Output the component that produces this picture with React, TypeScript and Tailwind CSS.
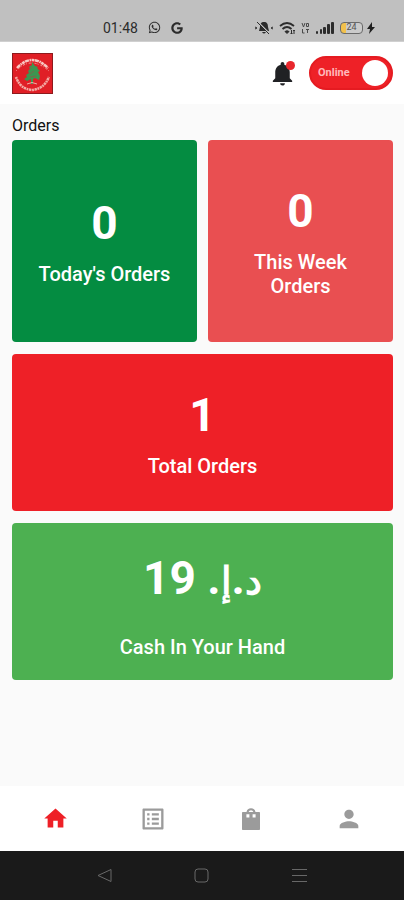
import type { ReactNode } from "react";
import { FaGoogle, FaWhatsapp } from "react-icons/fa";
import { MdHome, MdListAlt, MdNotifications, MdPerson } from "react-icons/md";

const navItems = [
  { label: "Home", icon: <MdHome size={27} />, active: true },
  { label: "Orders", icon: <MdListAlt size={28} />, active: false },
  { label: "Shop", icon: <BagIcon />, active: false },
  { label: "Profile", icon: <MdPerson size={28} />, active: false },
];

function BagIcon() {
  return (
    <svg width="20" height="24" viewBox="0 0 20 24" fill="currentColor">
      <path
        fillRule="evenodd"
        d="M2 5h3.500a4.600 4.600 0 0 1 9 0H18c.6 0 1 .4 1 1v16c0 .6-.4 1-1 1H2c-.6 0-1-.4-1-1V6c0-.6.4-1 1-1Zm5.600 0h4.800a2.500 2.500 0 0 0-4.800 0ZM5.400 7.200v3.400h3V7.200Zm6.200 0v3.400h3V7.200Z"
      />
    </svg>
  );
}

function Logo() {
  return (
    <svg width="41" height="41" viewBox="0 0 41 41" role="img" aria-label="Logo">
      <rect width="41" height="41" fill="#8e1a1d" />
      <rect x="1" y="1" width="39" height="39" fill="#e01f26" />
      {/* lettering ring */}
      <path d="M5 15Q20-1 36 15" fill="none" stroke="#f8c9c3" strokeWidth="2.500" strokeDasharray="4 .6 1.500 .6 3 .5" />
      <path d="M4 18Q19 2 37 18" fill="none" stroke="#f3a49f" strokeWidth="1" strokeDasharray="1 2 2 1" />
      <path d="M4 24Q8 36 20 37Q32 36 37 24" fill="none" stroke="#f3aaa4" strokeWidth="2.500" strokeDasharray="1.800 .6 2.500 .6" />
      {/* cedar */}
      <path
        d="M20 9l3 4 3 1-1 1 3 3-2 1 2 4-1 4-4-2-2 1v5h-2v-5l-4 2-3-2 3-2-1-2 3-2-1-2 2-2-1-2 3-2Z"
        fill="#3d9650"
      />
      <path d="M20 14l-3 3M22 18l-4 3M24 23l-6 1" stroke="#79694a" strokeWidth="1" />
      <path d="M15 31q5-3 10 0" fill="none" stroke="#f3aaa4" strokeWidth="1" />
    </svg>
  );
}

function StatusBar() {
  return (
    <div className="flex h-[42px] items-center justify-between border-b border-[#d0d0d0] bg-[#c0c0c0] pt-[14px] pr-[29px] pl-[103px] text-[#2c2c2c]">
      <div className="flex items-center gap-2.5">
        <span className="text-sm">01:48</span>
        <FaWhatsapp size={13} />
        <FaGoogle size={12} />
      </div>

      <div className="flex items-center gap-1.5">
        <svg width="18" height="14" viewBox="0 0 18 14">
          <path d="M9 1C6 1 5 3 5 6l-1 4h10l-1-4c0-3-1-5-4-5ZM7 11h4q-2 3-4 0" fill="#2c2c2c" />
          <path d="M3 1l12 12" stroke="#c0c0c0" strokeWidth="1.500" />
          <path d="M2 1l12 12M0 6l2 1-2 1M18 6l-2 1 2 1" fill="none" stroke="#2c2c2c" strokeWidth="1" />
        </svg>
        <svg width="16" height="14" viewBox="0 0 16 14" fill="none" stroke="#2c2c2c">
          <path d="M1 5q7-6 14 0M3.500 8q4.500-4 9 0" strokeWidth="1.800" />
          <path d="M6 10.500q2-1.500 4 0l-2 2Z" fill="#2c2c2c" strokeWidth="1" />
          <path d="M12.500 9v4M11.500 12l1 1 1-1M15 13V9M14.300 10l.7-1 .7 1" strokeWidth="1" />
        </svg>
        <svg width="9" height="12" viewBox="0 0 9 12" fill="none" stroke="#4a4a4a">
          <path d="M1 1l1.500 4L4 1M5.500 1.500h2v3h-2ZM1.500 7v4h2M5 7.500h3M6.500 7.500V11" />
        </svg>
        <svg width="18" height="12" viewBox="0 0 18 12" fill="#2c2c2c">
          <rect y="9" width="2" height="3" rx="1" />
          <rect x="4" y="7" width="2" height="5" rx="1" />
          <rect x="7" y="5" width="3" height="7" rx="1" />
          <rect x="11" y="2" width="3" height="10" rx="1" />
          <rect x="15" width="3" height="12" rx="1" />
        </svg>
        <div className="flex items-center gap-1">
          <div className="flex h-3 w-[23px] items-center justify-center rounded-sm border border-[#6a6a6a] bg-linear-to-r from-[#f2c14c] from-25% to-[#cbcbcb] to-25% text-[9px] text-[#555555]">
            24
          </div>
          <svg width="8" height="12" viewBox="0 0 8 12" fill="#202020">
            <path d="M5 0L0 7h3l-1 5 6-7H5Z" />
          </svg>
        </div>
      </div>
    </div>
  );
}

function Header() {
  return (
    <header className="flex h-[62px] items-center justify-between bg-white pr-[11px] pl-3">
      <Logo />

      <div className="flex items-center gap-3">
        <button type="button" aria-label="Notifications" className="relative text-[#202124]">
          <MdNotifications size={29} />
          <span className="absolute top-0.5 right-0.5 size-[9px] rounded-full bg-[#e8262c]" />
        </button>

        <label className="flex h-[34px] w-[84px] cursor-pointer items-center justify-between rounded-full border-2 border-[#e51b21] bg-[#ee2127] pr-[3px] pl-[7px]">
          <span className="text-[11px] font-bold text-[#ffb9bb]">Online</span>
          <input
            type="checkbox"
            role="switch"
            defaultChecked
            className="size-[26px] appearance-none rounded-full bg-white"
          />
        </label>
      </div>
    </header>
  );
}

type CardProps = {
  label: string;
  className: string;
  children: ReactNode;
};

function StatCard({ label, className, children }: CardProps) {
  return (
    <div
      className={`flex flex-col items-center justify-center gap-3 rounded px-6 text-center text-white ${className}`}
    >
      {children}
      <p className="text-xl leading-6 font-medium">{label}</p>
    </div>
  );
}

function Count({ value }: { value: number }) {
  return <p className="text-[46px] leading-[54px] font-bold">{value}</p>;
}

export default function App() {
  return (
    <div className="flex min-h-screen flex-col bg-[#fafafa] font-['Roboto',sans-serif]">
      <StatusBar />
      <Header />

      <main className="flex-1 pt-3 pr-[11px] pl-3">
        <h1 className="mb-1 text-base leading-5 text-[#111111]">Orders</h1>

        <div className="grid grid-cols-2 gap-x-[11px] gap-y-3">
          <StatCard label="Today's Orders" className="min-h-[202px] bg-[#048c41]">
            <Count value={0} />
          </StatCard>
          <StatCard label="This Week Orders" className="min-h-[202px] bg-[#e94f51]">
            <Count value={0} />
          </StatCard>
          <StatCard label="Total Orders" className="col-span-2 min-h-[157px] bg-[#ee2027]">
            <Count value={1} />
          </StatCard>
          <StatCard label="Cash In Your Hand" className="col-span-2 min-h-[157px] bg-[#4db051]">
            <p dir="rtl" className="pb-2 text-[46px] leading-[68px] font-bold">
              <span className="text-[38px]">د</span>.<span className="text-[38px]">إ</span>. 19
            </p>
          </StatCard>
        </div>
      </main>

      <nav className="grid h-[65px] grid-cols-4 items-center bg-white px-1.5">
        {navItems.map((item) => (
          <a
            key={item.label}
            href="#"
            aria-label={item.label}
            className={`flex justify-center ${item.active ? "text-[#ee2027]" : "text-[#9b9b9b]"}`}
          >
            {item.icon}
          </a>
        ))}
      </nav>

      {/* system buttons */}
      <div className="grid h-[49px] grid-cols-3 place-items-center bg-[#1a1a1a] px-14">
        <button type="button" aria-label="Back">
          <svg width="15" height="15" viewBox="0 0 15 15" fill="none" stroke="#686868">
            <path d="M14 1.500v12L1 7.500Z" strokeLinejoin="round" />
          </svg>
        </button>
        <button type="button" aria-label="Home screen">
          <svg width="15" height="15" viewBox="0 0 15 15" fill="none" stroke="#686868">
            <rect x="1" y="1" width="13" height="13" rx="3" />
          </svg>
        </button>
        <button type="button" aria-label="Recent apps">
          <svg width="15" height="15" viewBox="0 0 15 15" stroke="#686868">
            <path d="M0 1.500h15M0 7.500h15M0 13.500h15" />
          </svg>
        </button>
      </div>
    </div>
  );
}
